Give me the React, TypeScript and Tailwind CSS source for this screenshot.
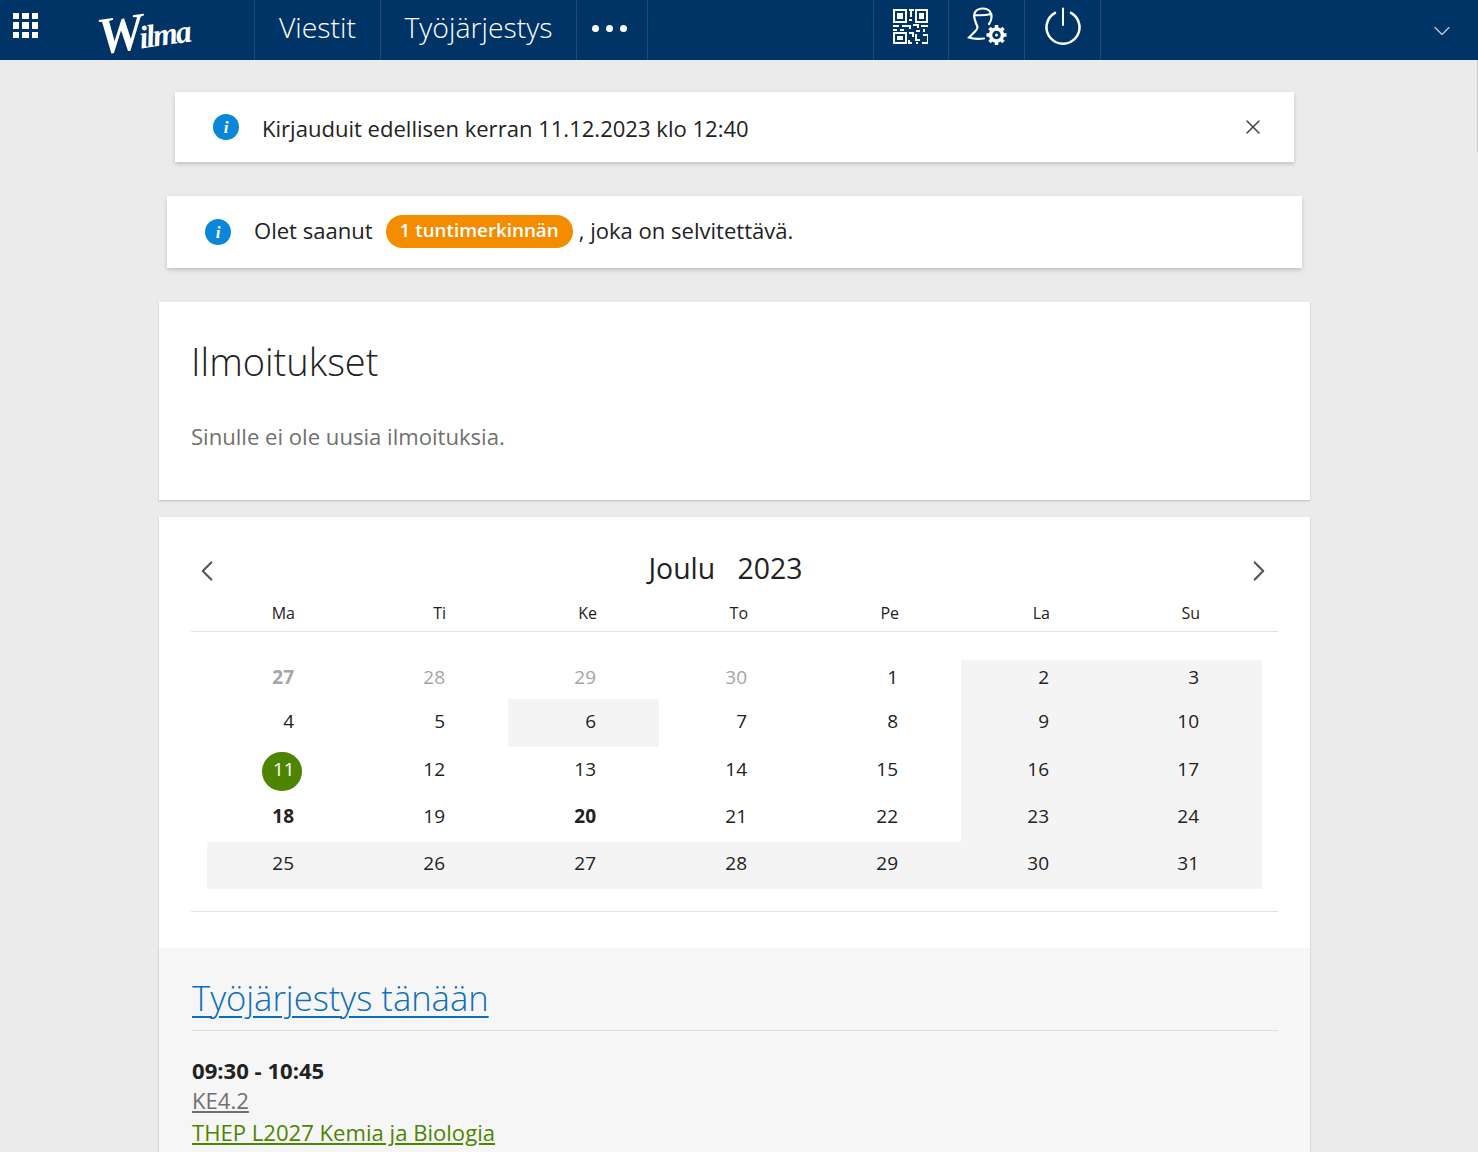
import React from "react";
import { ChevronDown, ChevronLeft, ChevronRight, X } from "lucide-react";

const DAY_NAMES = ["Ma", "Ti", "Ke", "To", "Pe", "La", "Su"];
const COLS = "grid grid-cols-[151px_150px_151px_151px_151px_151px_150px]";

type Day = { n: number; muted?: boolean; bold?: boolean; today?: boolean; shade?: boolean };

const WEEKS: { height: string; pad: string; days: Day[] }[] = [
  {
    height: "h-[39px]",
    pad: "pt-[3px]",
    days: [
      { n: 27, muted: true, bold: true },
      { n: 28, muted: true },
      { n: 29, muted: true },
      { n: 30, muted: true },
      { n: 1 },
      { n: 2, shade: true },
      { n: 3, shade: true },
    ],
  },
  {
    height: "h-[48px]",
    pad: "pt-[8px]",
    days: [
      { n: 4 },
      { n: 5 },
      { n: 6, shade: true },
      { n: 7 },
      { n: 8 },
      { n: 9, shade: true },
      { n: 10, shade: true },
    ],
  },
  {
    height: "h-[48px]",
    pad: "pt-[8px]",
    days: [
      { n: 11, today: true },
      { n: 12 },
      { n: 13 },
      { n: 14 },
      { n: 15 },
      { n: 16, shade: true },
      { n: 17, shade: true },
    ],
  },
  {
    height: "h-[47px]",
    pad: "pt-[7px]",
    days: [
      { n: 18, bold: true },
      { n: 19 },
      { n: 20, bold: true },
      { n: 21 },
      { n: 22 },
      { n: 23, shade: true },
      { n: 24, shade: true },
    ],
  },
  {
    height: "h-[47px]",
    pad: "pt-[7px]",
    days: [
      { n: 25, shade: true },
      { n: 26, shade: true },
      { n: 27, shade: true },
      { n: 28, shade: true },
      { n: 29, shade: true },
      { n: 30, shade: true },
      { n: 31, shade: true },
    ],
  },
];

function InfoIcon() {
  return (
    <span className="flex h-[26px] w-[26px] shrink-0 items-center justify-center rounded-full bg-[#0a87d8] font-['Liberation_Serif',serif] text-[17px] leading-none font-bold text-white italic">
      i
    </span>
  );
}

function QrIcon() {
  return (
    <svg width="36" height="36" viewBox="0 0 36 36" fill="none" stroke="white" strokeWidth="2">
      <rect x="2" y="2" width="12" height="12" />
      <rect x="5" y="5" width="6" height="6" fill="white" stroke="none" />
      <rect x="24" y="2" width="11" height="12" />
      <rect x="27" y="5" width="5" height="6" fill="white" stroke="none" />
      <rect x="2" y="25" width="12" height="10" />
      <rect x="5" y="28" width="6" height="4" fill="white" stroke="none" />
      <path d="M17 2h5M19 2v7M17 12h3M1 18h6M10 18h8v3M21 17h5v3M29 18h7M1 22h4M8 22h4M24 23h4M32 21v3M17 25h4v4M17 32v3h3M24 26v6h4M31 27h5v8h-6M24 35h2" />
    </svg>
  );
}

function UserGearIcon() {
  return (
    <svg width="40" height="40" viewBox="0 0 40 40" fill="none" stroke="white" strokeLinecap="round">
      <path
        strokeWidth="2.200"
        d="M8 13C5.500 6 9 1.500 16 1.500c6 0 9 4 8.500 9-.2 2.500-1 4.500-2.500 6.500M8 8c5 .5 10 .5 16-1M8 13c.5 3 2 5 2.500 7 .3 2-1 3-3 5l-5.500 5.500c4 1.500 11 1.500 15 1"
      />
      <circle cx="29.500" cy="28" r="6" strokeWidth="3.500" />
      <circle cx="29.500" cy="28" r="1.500" fill="white" stroke="none" />
      <path
        strokeWidth="3.500"
        strokeLinecap="butt"
        d="M29.500 18v4M29.500 34v4M19.500 28h4M35.500 28h4M22.500 21l3 3M33.500 32l3 3M22.500 35l3-3M33.500 24l3-3"
      />
    </svg>
  );
}

function PowerIcon() {
  return (
    <svg width="36" height="40" viewBox="0 0 36 40" fill="none" stroke="white" strokeWidth="2.500" strokeLinecap="round">
      <path d="M10 5.800a16.500 16.500 0 1 0 16 0" />
      <path d="M18 1.500v16.500" strokeWidth="2" />
    </svg>
  );
}

function AppsIcon() {
  return (
    <div className="grid w-[25px] grid-cols-3 gap-[3px]">
      {[...Array(9)].map((_, i) => (
        <span key={i} className="h-[6.300px] w-[6.300px] bg-white" />
      ))}
    </div>
  );
}

function NavBar() {
  return (
    <header className="flex h-[60px] items-stretch bg-[#003366] text-white">
      <div className="flex w-[254px] shrink-0 items-center">
        <div className="mb-[9px] ml-[13px]">
          <AppsIcon />
        </div>
        <span className="mt-[2px] ml-[59px] inline-block -rotate-[8deg] font-['Liberation_Serif',serif] text-[32px] leading-none font-bold tracking-[-2px] italic first-letter:text-[52px] first-letter:tracking-[-5px]">
          Wilma
        </span>
      </div>
      <a className="flex w-[126px] items-center justify-center border-l border-[#1f4c7a] pb-[6px] text-[28.400px] font-light">Viestit</a>
      <a className="flex w-[196px] items-center justify-center border-l border-[#1f4c7a] pb-[6px] text-[28.400px] font-light">Työjärjestys</a>
      <div className="flex w-[72px] items-center justify-center gap-[7px] border-x border-[#1f4c7a] pr-[5px] pb-[4px]">
        <span className="h-[7px] w-[7px] rounded-full bg-white" />
        <span className="h-[7px] w-[7px] rounded-full bg-white" />
        <span className="h-[7px] w-[7px] rounded-full bg-white" />
      </div>
      <div className="w-[225px]" />
      <div className="flex w-[75px] items-center justify-center border-l border-[#1f4c7a] pr-[2px] pb-[8px]">
        <QrIcon />
      </div>
      <div className="flex w-[76px] items-center justify-center border-l border-[#1f4c7a] pb-[6px]">
        <UserGearIcon />
      </div>
      <div className="flex w-[77px] items-center justify-center border-x border-[#1f4c7a] pb-[6px]">
        <PowerIcon />
      </div>
      <div className="flex flex-1 items-center justify-end pt-[2px] pr-[22px]">
        <ChevronDown size={28} strokeWidth={1} className="text-[#c6d2de]" />
      </div>
    </header>
  );
}

function Calendar() {
  return (
    <div className="px-8 pt-[32px]">
      <div className="flex h-[44px] items-start justify-between pr-[2px]">
        <ChevronLeft size={34} strokeWidth={1.5} className="mt-[5px] -ml-[1px] text-[#555]" />
        <h2 className="mt-[-1px] mr-[15px] text-[28.400px] leading-[40px] text-[#222]">
          Joulu <span className="ml-[15px]">2023</span>
        </h2>
        <ChevronRight size={34} strokeWidth={1.5} className="mt-[5px] text-[#555]" />
      </div>
      <div className={`${COLS} h-[39px] border-b border-[#e2e2e2] px-4 pt-[8px] text-[16px] leading-[24px] text-[#222]`}>
        {DAY_NAMES.map((d) => (
          <div key={d} className="pr-[62px] text-right first:pr-[63px]">
            {d}
          </div>
        ))}
      </div>
      <div className="px-4 pt-[28px] pb-[22px]">
        {WEEKS.map((w, i) => (
          <div key={i} className={`${COLS} ${w.height}`}>
            {w.days.map((d, j) => (
              <div
                key={j}
                className={`pr-[63px] text-right text-[19px] leading-[28px] first:pr-[64px] ${w.pad} ${d.shade ? "bg-[#f4f4f4]" : ""} ${d.muted ? "text-[#a5a5a5]" : "text-[#222]"} ${d.bold ? "font-bold" : ""}`}
              >
                {d.today ? (
                  <span className="relative inline-block w-[21px] text-center text-white">
                    <span className="absolute top-[-3px] left-[-11px] h-[39px] w-[40px] rounded-full bg-[#4d8500]" />
                    <span className="relative">{d.n}</span>
                  </span>
                ) : (
                  d.n
                )}
              </div>
            ))}
          </div>
        ))}
      </div>
      <div className="border-t border-[#e2e2e2]" />
    </div>
  );
}

export default function App() {
  return (
    <div className="relative h-screen overflow-hidden bg-[#ebebeb] font-['Open_Sans',sans-serif]">
      <NavBar />
      <div className="absolute top-[60px] right-0 h-[92px] w-px bg-[#c8c8c8]" />
      <main className="mt-[32px] ml-[159px] flex w-[1151px] flex-col">
        <div className="mx-4 flex h-[70px] items-center bg-white pr-[29px] pl-[38px] shadow-[0_2px_4px_rgba(0,0,0,0.18)]">
          <InfoIcon />
          <p className="mt-[3px] ml-[23px] flex-1 text-[22.050px] text-[#222]">Kirjauduit edellisen kerran 11.12.2023 klo 12:40</p>
          <X size={24} strokeWidth={1.5} className="text-[#444]" />
        </div>
        <div className="mx-2 mt-[34px] flex h-[72px] items-center bg-white pl-[38px] shadow-[0_2px_4px_rgba(0,0,0,0.18)]">
          <InfoIcon />
          <p className="mb-[3px] ml-[23px] text-[22.050px] text-[#222]">Olet saanut</p>
          <span className="mr-[13px] mb-[2px] ml-[13px] flex h-[33px] items-center rounded-full bg-[#f48c00] px-[14px] pb-[1px] text-[18.800px] font-semibold text-white">
            1 tuntimerkinnän
          </span>
          <p className="mb-[3px] ml-[-7px] text-[22.050px] text-[#222]">, joka on selvitettävä.</p>
        </div>
        <section className="mt-[34px] h-[198px] bg-white px-8 pt-[32px] shadow-[0_1px_2px_rgba(0,0,0,0.2)]">
          <h1 className="text-[38px] leading-[54px] font-light text-[#222]">Ilmoitukset</h1>
          <p className="mt-[33px] text-[22.100px] leading-[30px] text-[#707070]">Sinulle ei ole uusia ilmoituksia.</p>
        </section>
        <section className="mt-[17px] bg-white shadow-[0_1px_2px_rgba(0,0,0,0.2)]">
          <Calendar />
          <div className="mt-[36px] h-[300px] bg-[#f6f6f6] pt-[23px] pr-8 pl-[33px]">
            <div className="h-[60px] border-b border-[#dcdcdc]">
              <a className="text-[34.600px] leading-[54px] font-light text-[#0a6ebd] underline decoration-2 underline-offset-[5px]">Työjärjestys tänään</a>
            </div>
            <p className="mt-[24px] text-[22.100px] leading-[30px] font-bold text-[#222]">09:30 - 10:45</p>
            <a className="-mt-[1px] block text-[22.100px] leading-[32px] text-[#707070] underline">KE4.2</a>
            <a className="block text-[22.100px] leading-[32px] text-[#4d8500] underline">THEP L2027 Kemia ja Biologia</a>
          </div>
        </section>
      </main>
    </div>
  );
}
